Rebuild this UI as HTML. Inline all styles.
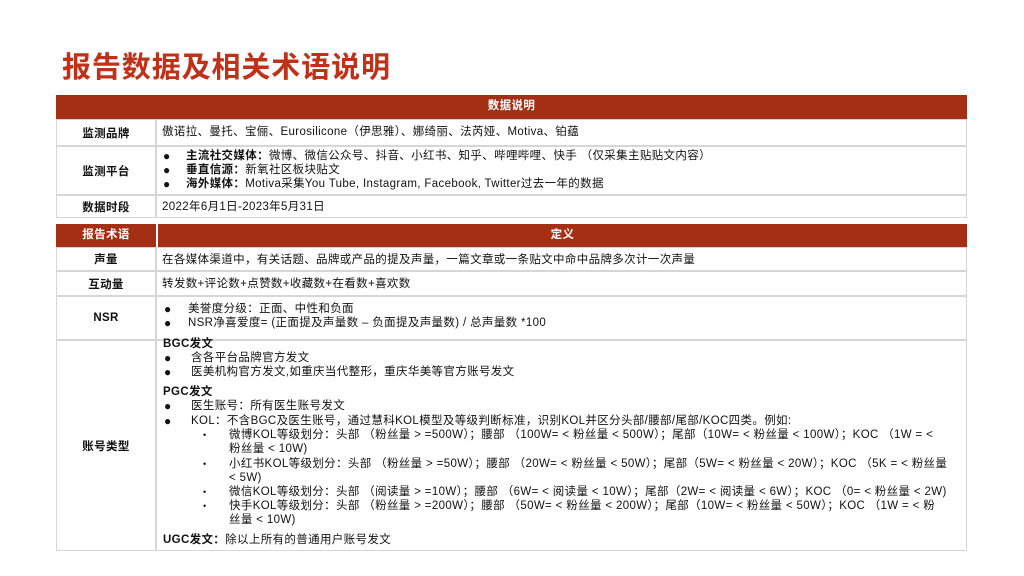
<!DOCTYPE html>
<html><head><meta charset="utf-8"><style>
*{margin:0;padding:0;box-sizing:border-box}
body{width:1024px;height:576px;background:#fff;position:relative;overflow:hidden;font-family:"Liberation Sans","Noto Sans CJK SC",sans-serif;font-size:11.5px;color:#111;letter-spacing:0.35px}
.t{position:absolute;white-space:nowrap;line-height:14px}
.title{position:absolute;left:62px;top:44px;font-size:29px;font-weight:bold;color:#c0311a;letter-spacing:0.9px}
.h{position:absolute;background:#a33015;color:#fff;font-weight:bold;text-align:center;line-height:23px}
.c{position:absolute;border:1px solid #d6d6d6;background:#fff}
.k{position:absolute;font-weight:bold;text-align:center;display:flex;align-items:center;justify-content:center;border:1px solid #d6d6d6}
b{font-weight:bold}
.d{position:absolute;font-size:12px;line-height:14px}
.s{position:absolute;font-size:9px;line-height:14px}
</style></head><body>
<div class="title">报告数据及相关术语说明</div>

<div class="h" style="left:56px;top:95px;width:911px;height:24px">数据说明</div>
<div class="k" style="left:56px;top:119px;width:100px;height:27px">监测品牌</div>
<div class="c" style="left:156px;top:119px;width:811px;height:27px"></div>
<div class="t" style="left:162px;top:125px">傲诺拉、曼托、宝俪、Eurosilicone（伊思雅）、娜绮丽、法芮娅、Motiva、铂蕴</div>
<div class="k" style="left:56px;top:146px;width:100px;height:49px">监测平台</div>
<div class="c" style="left:156px;top:146px;width:811px;height:49px"></div>
<div class="d" style="left:163px;top:149px">●</div><div class="t" style="left:186px;top:149px"><b>主流社交媒体：</b>微博、微信公众号、抖音、小红书、知乎、哔哩哔哩、快手 （仅采集主贴贴文内容）</div>
<div class="d" style="left:163px;top:163px">●</div><div class="t" style="left:186px;top:163px"><b>垂直信源：</b>新氧社区板块贴文</div>
<div class="d" style="left:163px;top:177px">●</div><div class="t" style="left:186px;top:177px"><b>海外媒体：</b>Motiva采集You Tube, Instagram, Facebook, Twitter过去一年的数据</div>
<div class="k" style="left:56px;top:195px;width:100px;height:23px">数据时段</div>
<div class="c" style="left:156px;top:195px;width:811px;height:23px"></div>
<div class="t" style="left:162px;top:200px">2022年6月1日-2023年5月31日</div>

<div class="h" style="left:56px;top:224px;width:100px;height:23px">报告术语</div>
<div class="h" style="left:158px;top:224px;width:809px;height:23px">定义</div>
<div class="k" style="left:56px;top:247px;width:100px;height:24px">声量</div>
<div class="c" style="left:156px;top:247px;width:811px;height:24px"></div>
<div class="t" style="left:162px;top:253px">在各媒体渠道中，有关话题、品牌或产品的提及声量，一篇文章或一条贴文中命中品牌多次计一次声量</div>
<div class="k" style="left:56px;top:271px;width:100px;height:25px">互动量</div>
<div class="c" style="left:156px;top:271px;width:811px;height:25px"></div>
<div class="t" style="left:162px;top:277px">转发数+评论数+点赞数+收藏数+在看数+喜欢数</div>
<div class="k" style="left:56px;top:296px;width:100px;height:44px">NSR</div>
<div class="c" style="left:156px;top:296px;width:811px;height:44px"></div>
<div class="d" style="left:164px;top:302px">●</div><div class="t" style="left:188px;top:302px">美誉度分级：正面、中性和负面</div>
<div class="d" style="left:164px;top:316px">●</div><div class="t" style="left:188px;top:316px">NSR净喜爱度= (正面提及声量数 – 负面提及声量数) / 总声量数 *100</div>
<div class="k" style="left:56px;top:340px;width:100px;height:211px">账号类型</div>
<div class="c" style="left:156px;top:340px;width:811px;height:211px"></div>
<div class="t" style="left:163px;top:337px"><b>BGC发文</b></div>
<div class="d" style="left:164px;top:351px">●</div><div class="t" style="left:191px;top:351px">含各平台品牌官方发文</div>
<div class="d" style="left:164px;top:365px">●</div><div class="t" style="left:191px;top:365px">医美机构官方发文,如重庆当代整形，重庆华美等官方账号发文</div>
<div class="t" style="left:163px;top:385px"><b>PGC发文</b></div>
<div class="d" style="left:164px;top:399px">●</div><div class="t" style="left:191px;top:399px">医生账号：所有医生账号发文</div>
<div class="d" style="left:164px;top:414px">●</div><div class="t" style="left:191px;top:414px">KOL：不含BGC及医生账号，通过慧科KOL模型及等级判断标准，识别KOL并区分头部/腰部/尾部/KOC四类。例如:</div>
<div class="s" style="left:203px;top:428px">•</div><div class="t" style="left:229px;top:428px">微博KOL等级划分：头部 （粉丝量 &gt; =500W）；腰部 （100W= &lt; 粉丝量 &lt; 500W）；尾部（10W= &lt; 粉丝量 &lt; 100W）；KOC （1W = &lt;</div>
<div class="t" style="left:229px;top:442px">粉丝量 &lt; 10W)</div>
<div class="s" style="left:203px;top:457px">•</div><div class="t" style="left:229px;top:457px">小红书KOL等级划分：头部 （粉丝量 &gt; =50W）；腰部 （20W= &lt; 粉丝量 &lt; 50W）；尾部（5W= &lt; 粉丝量 &lt; 20W）；KOC （5K = &lt; 粉丝量</div>
<div class="t" style="left:229px;top:471px"> &lt; 5W)</div>
<div class="s" style="left:203px;top:485px">•</div><div class="t" style="left:229px;top:485px">微信KOL等级划分：头部 （阅读量 &gt; =10W）；腰部 （6W= &lt; 阅读量 &lt; 10W）；尾部（2W= &lt; 阅读量 &lt; 6W）；KOC （0= &lt; 粉丝量 &lt; 2W)</div>
<div class="s" style="left:203px;top:499px">•</div><div class="t" style="left:229px;top:499px">快手KOL等级划分：头部 （粉丝量 &gt; =200W）；腰部 （50W= &lt; 粉丝量 &lt; 200W）；尾部（10W= &lt; 粉丝量 &lt; 50W）；KOC （1W = &lt; 粉</div>
<div class="t" style="left:229px;top:513px">丝量 &lt; 10W)</div>
<div class="t" style="left:163px;top:533px"><b>UGC发文：</b>除以上所有的普通用户账号发文</div>
</body></html>
